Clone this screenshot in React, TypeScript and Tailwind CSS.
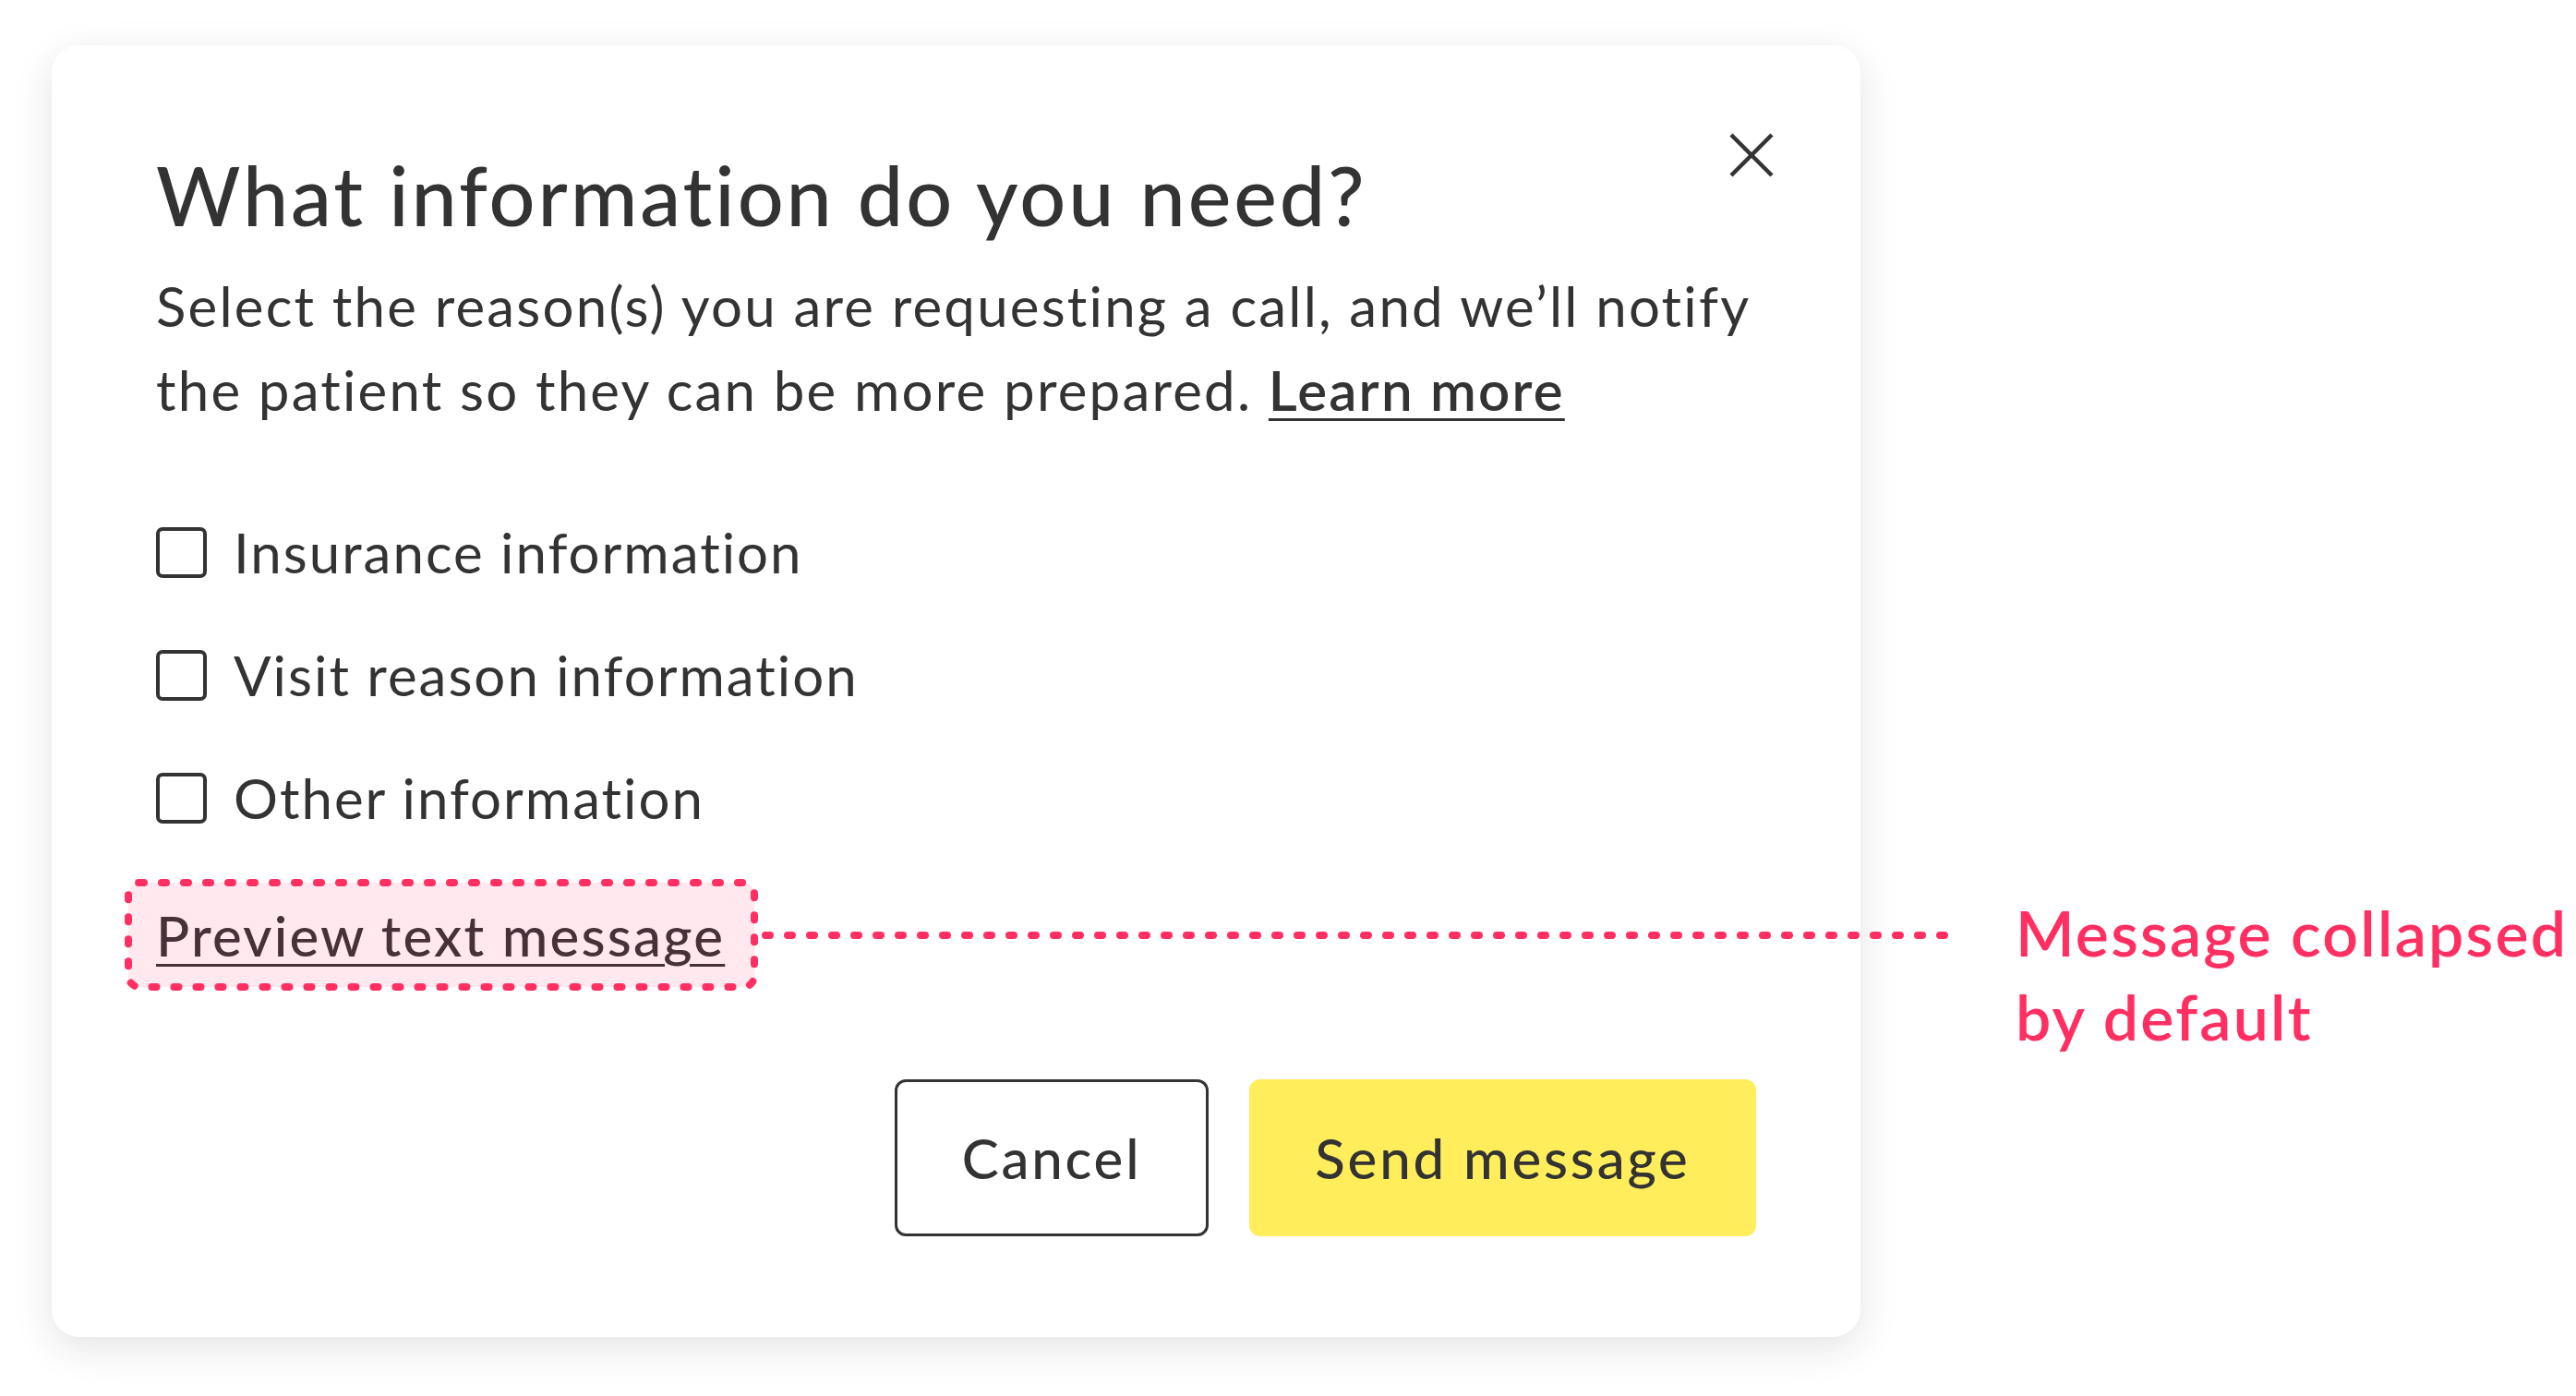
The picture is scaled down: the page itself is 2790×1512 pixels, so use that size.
import React from 'react';

const font = { fontFamily: 'Lato, "Noto Sans", sans-serif' };

const reasons = ['Insurance information', 'Visit reason information', 'Other information'];

function CloseIcon() {
  return (
    <svg width="48" height="48" viewBox="0 0 48 48" fill="none">
      <path d="M2 2 L46 46 M46 2 L2 46" stroke="#333333" strokeWidth="4.5" />
    </svg>
  );
}

export default function App() {
  return (
    <div className="w-[2790px] h-[1512px] bg-white overflow-hidden flex items-start pl-[56px] pt-[49px] text-[#333333]" style={font}>
      {/* Dialog */}
      <div className="relative w-[1959px] h-[1399px] shrink-0 bg-white rounded-[30px] shadow-[0_12px_44px_rgba(0,0,0,0.11)] px-[113px] pt-[111px]">
        <button className="absolute right-[94px] top-[95px]">
          <CloseIcon />
        </button>

        <h1 className="text-[88px] leading-[103px] font-medium tracking-[2.9px] whitespace-nowrap">
          What information do you need?
        </h1>
        <p className="mt-[23px] text-[60px] leading-[91px] tracking-[2.2px] whitespace-nowrap">
          Select the reason(s) you are requesting a call, and we’ll notify
          <br />
          the patient so they can be more prepared.{' '}
          <a className="font-semibold underline underline-offset-[8px] decoration-[3px]">Learn more</a>
        </p>

        <div className="mt-[103px] flex flex-col gap-[78px]">
          {reasons.map((r) => (
            <label key={r} className="flex items-center gap-[29px] h-[55px]">
              <span className="w-[55px] h-[55px] rounded-[7px] border-[4px] border-[#333333] bg-white shrink-0" />
              <span className="text-[60px] leading-[55px] tracking-[2px] whitespace-nowrap">{r}</span>
            </label>
          ))}
        </div>

        {/* Preview link with annotation highlight */}
        <div className="relative mt-[64px] -ml-[30px] w-[678px] h-[113px] bg-[#ffe8ee] rounded-[12px] flex items-center pl-[30px]">
          <svg className="absolute inset-0 overflow-visible" width="678" height="113">
            <rect
              x="0"
              y="0"
              width="678"
              height="113"
              rx="12"
              fill="none"
              stroke="#ff2f62"
              strokeWidth="8"
              strokeLinecap="round"
              strokeDasharray="5 19"
            />
          </svg>
          <span className="relative text-[60px] leading-[1.2] font-medium tracking-[2.2px] text-[#4a3038] underline underline-offset-[8px] decoration-[3px] whitespace-nowrap">
            Preview text message
          </span>
          <svg className="absolute left-full top-1/2 -translate-y-1/2 overflow-visible z-10" width="1310" height="10">
            <line
              x1="12"
              y1="5"
              x2="1305"
              y2="5"
              stroke="#ff2f62"
              strokeWidth="8"
              strokeLinecap="round"
              strokeDasharray="5 19"
            />
          </svg>
        </div>

        <div className="mt-[100px] flex justify-end gap-[44px]">
          <button className="w-[340px] h-[170px] rounded-[12px] border-[3px] border-[#333333] bg-white text-[60px] font-medium tracking-[2.8px]">
            Cancel
          </button>
          <button className="w-[549px] h-[170px] rounded-[12px] bg-[#ffed5b] text-[60px] font-medium tracking-[2.8px]">
            Send message
          </button>
        </div>
      </div>

      {/* Annotation */}
      <div className="ml-[168px] mt-[915px] text-[68px] leading-[91px] font-semibold text-[#ff2f62] tracking-[2.2px] whitespace-nowrap">
        Message collapsed
        <br />
        by default
      </div>
    </div>
  );
}
